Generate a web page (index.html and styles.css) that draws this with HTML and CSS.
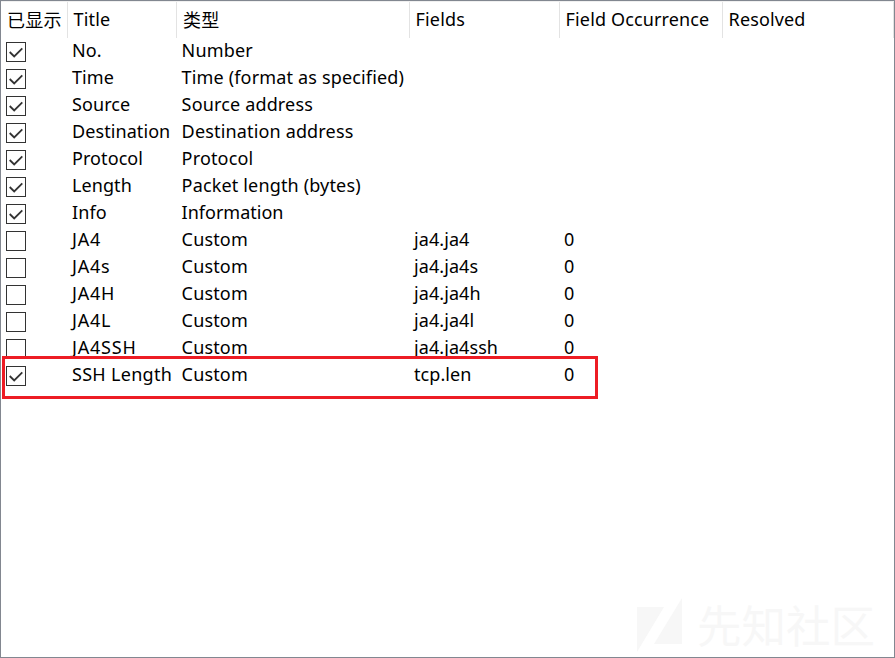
FILE: index.html
```
<!DOCTYPE html>
<html lang="zh-CN">
<head>
<meta charset="utf-8">
<title>Columns</title>
<link rel="stylesheet" href="styles.css">
</head>
<body>
<main class="panel">
<div class="row head"><span class="cjk">已显示</span><span>Title</span><span class="cjk">类型</span><span>Fields</span><span>Field Occurrence</span><span>Resolved</span></div>
<div class="row"><i class="box on"><svg viewBox="0 0 20 20"><path d="M3 10l5 5 9-9"/></svg></i><span>No.</span><span class="type">Number</span></div>
<div class="row"><i class="box on"><svg viewBox="0 0 20 20"><path d="M3 10l5 5 9-9"/></svg></i><span>Time</span><span class="type">Time (format as specified)</span></div>
<div class="row"><i class="box on"><svg viewBox="0 0 20 20"><path d="M3 10l5 5 9-9"/></svg></i><span>Source</span><span class="type">Source address</span></div>
<div class="row"><i class="box on"><svg viewBox="0 0 20 20"><path d="M3 10l5 5 9-9"/></svg></i><span>Destination</span><span class="type">Destination address</span></div>
<div class="row"><i class="box on"><svg viewBox="0 0 20 20"><path d="M3 10l5 5 9-9"/></svg></i><span>Protocol</span><span class="type">Protocol</span></div>
<div class="row"><i class="box on"><svg viewBox="0 0 20 20"><path d="M3 10l5 5 9-9"/></svg></i><span>Length</span><span class="type">Packet length (bytes)</span></div>
<div class="row"><i class="box on"><svg viewBox="0 0 20 20"><path d="M3 10l5 5 9-9"/></svg></i><span>Info</span><span class="type info">Information</span></div>
<div class="row"><i class="box"></i><span class="caps">JA4</span><span class="type">Custom</span><span>ja4.ja4</span><span>0</span></div>
<div class="row"><i class="box"></i><span class="caps">JA4s</span><span class="type">Custom</span><span>ja4.ja4s</span><span>0</span></div>
<div class="row"><i class="box"></i><span class="caps">JA4H</span><span class="type">Custom</span><span>ja4.ja4h</span><span>0</span></div>
<div class="row"><i class="box"></i><span class="caps">JA4L</span><span class="type">Custom</span><span>ja4.ja4l</span><span>0</span></div>
<div class="row"><i class="box"></i><span class="caps">JA4SSH</span><span class="type">Custom</span><span>ja4.ja4ssh</span><span>0</span></div>
<div class="row marked"><i class="box on"><svg viewBox="0 0 20 20"><path d="M3 10l5 5 9-9"/></svg></i><span class="ssh">SSH Length</span><span class="type">Custom</span><span>tcp.len</span><span>0</span></div>
<div class="watermark"><svg viewBox="0 0 48 56"><path d="M1 9H28L1 54ZM46 0V46H18Z"/></svg><span>先知社区</span></div>
</main>
</body>
</html>
```
FILE: styles.css
```
* { box-sizing: border-box; }
body { margin: 0; background: #fff; }
.panel {
  position: relative;
  width: 895px;
  height: 658px;
  border: 1px solid #828790;
  background: #fff;
  color: #000;
  font: 18px/25px "Noto Sans", "Noto Sans CJK SC", sans-serif;
  overflow: hidden;
}
.row {
  position: relative;
  display: grid;
  grid-template-columns: 67px 109px 233px 150px 163px 171px;
  height: 27px;
  white-space: nowrap;
}
.row > span { padding-left: 4px; letter-spacing: 0.08px; }
.row > .type { padding-left: 4.6px; letter-spacing: 0.16px; }
.row > .info { letter-spacing: 0; }
.row > .caps { letter-spacing: 0.8px; }
.row > .ssh { letter-spacing: 0.3px; }
.head { height: 37px; line-height: 35px; border-top: 1px solid #f0f0f0; }
.head > span { padding-left: 5.6px; border-right: 1px solid #e3e3e3; letter-spacing: 0.14px; }
.head > .cjk { padding-left: 6px; font-family: "Noto Sans CJK SC", sans-serif; font-weight: 400; letter-spacing: 0.3px; }
.box {
  width: 20px;
  height: 20px;
  margin: 4px 0 0 5px;
  border: 1px solid #333;
}
.box svg { display: block; width: 18px; height: 18px; fill: none; stroke: #333; stroke-width: 2; }
.marked::after {
  content: "";
  box-sizing: border-box;
  position: absolute;
  left: 1px;
  top: -6px;
  width: 596px;
  height: 43px;
  border: 3px solid #ed1c24;
}
.watermark {
  position: absolute;
  right: 19px;
  bottom: 3px;
  display: flex;
  align-items: center;
  gap: 13px;
  color: #f7f7f7;
  font: 44.5px/56px "Noto Sans CJK SC", sans-serif;
}
.watermark svg { width: 48px; height: 56px; fill: #f7f7f7; }
.watermark span { position: relative; top: -2px; }
```
